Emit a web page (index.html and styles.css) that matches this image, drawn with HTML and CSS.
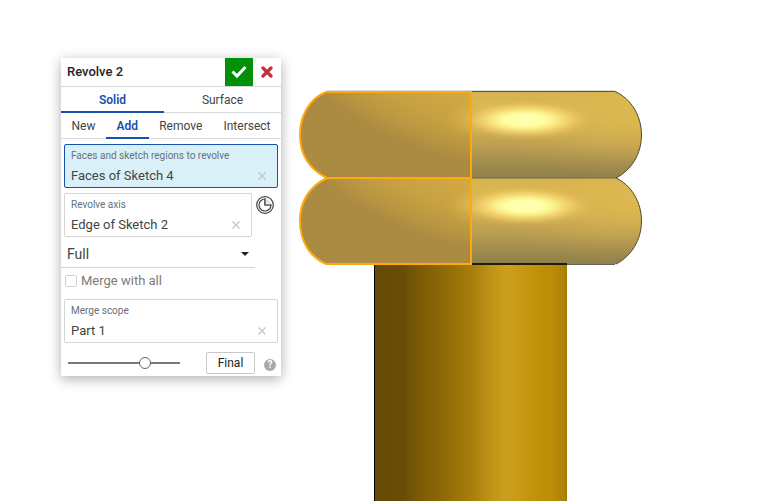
FILE: index.html
```html
<!DOCTYPE html>
<html lang="en">
<head>
<meta charset="utf-8">
<title>Revolve 2</title>
<link rel="stylesheet" href="styles.css">
</head>
<body>
<main class="workspace">
  <form class="panel">
    <header class="panel-header">
      <h1 class="title">Revolve 2</h1>
      <button type="button" class="accept" aria-label="Accept">
        <svg width="16" height="14" viewBox="0 0 16 14"><path d="M1.500 6.500 6 11 14.500 2" fill="none" stroke="#fff" stroke-width="3"/></svg>
      </button>
      <button type="button" class="cancel" aria-label="Cancel">
        <svg width="12" height="12" viewBox="0 0 12 12"><path d="M2 2 10 10M10 2 2 10" stroke="#c1303b" stroke-width="3.200" stroke-linecap="round"/></svg>
      </button>
    </header>
    <nav class="tabs tabs-type">
      <button type="button" class="tab active">Solid</button>
      <button type="button" class="tab">Surface</button>
    </nav>
    <nav class="tabs tabs-operation">
      <button type="button" class="tab">New</button>
      <button type="button" class="tab active">Add</button>
      <button type="button" class="tab">Remove</button>
      <button type="button" class="tab">Intersect</button>
    </nav>
    <div class="fields">
      <div class="field selected">
        <label for="faces">Faces and sketch regions to revolve</label>
        <div class="entry">
          <input id="faces" type="text" value="Faces of Sketch 4">
          <button type="button" class="clear" aria-label="Clear faces"><svg width="8" height="8" viewBox="0 0 8 8"><path d="M.5.5l7 7M7.5.5l-7 7"/></svg></button>
        </div>
      </div>
      <div class="axis-row">
        <div class="field">
          <label for="axis">Revolve axis</label>
          <div class="entry">
            <input id="axis" type="text" value="Edge of Sketch 2">
            <button type="button" class="clear" aria-label="Clear axis"><svg width="8" height="8" viewBox="0 0 8 8"><path d="M.5.5l7 7M7.5.5l-7 7"/></svg></button>
          </div>
        </div>
        <button type="button" class="axis-mode" aria-label="Revolve angle">
          <svg width="18" height="18" viewBox="0 0 18 18" fill="none" stroke="#444" stroke-width="1.200"><circle cx="9" cy="9" r="8.300"/><path d="M9 3A6 6 0 1 0 15 9H9z" fill="#fff"/><path d="M9 3v6h6A6 6 0 0 0 9 3z" fill="#e4e4e4" stroke="none"/><path d="M9 2.500V9h6.500"/></svg>
        </button>
      </div>
    </div>
    <div class="extent">
      <select aria-label="Revolve type"><option>Full</option></select>
      <svg class="caret" width="8" height="4" viewBox="0 0 8 4"><path d="M0 0h8L4 4z" fill="#222"/></svg>
    </div>
    <label class="merge-all"><input type="checkbox">Merge with all</label>
    <div class="fields">
      <div class="field">
        <label for="scope">Merge scope</label>
        <div class="entry">
          <input id="scope" type="text" value="Part 1">
          <button type="button" class="clear" aria-label="Clear scope"><svg width="8" height="8" viewBox="0 0 8 8"><path d="M.5.5l7 7M7.5.5l-7 7"/></svg></button>
        </div>
      </div>
    </div>
    <footer class="panel-footer">
      <input class="opacity" type="range" min="0" max="100" value="71" aria-label="Preview opacity">
      <button type="button" class="final">Final</button>
      <button type="button" class="help" aria-label="Help">?</button>
    </footer>
  </form>
  <svg class="model" viewBox="281 0 502 501" preserveAspectRatio="xMinYMin meet" role="img" aria-label="Revolved part preview">
    <defs>
      <linearGradient id="shaft" x1="0" x2="1" y1="0" y2="0">
        <stop offset="0" stop-color="#644a04"/><stop offset=".15" stop-color="#684e05"/>
        <stop offset=".17" stop-color="#6c5205"/><stop offset=".27" stop-color="#835f06"/>
        <stop offset=".38" stop-color="#936c06"/><stop offset=".5" stop-color="#a67e0a"/>
        <stop offset=".6" stop-color="#bd9216"/><stop offset=".68" stop-color="#cc9f1e"/>
        <stop offset=".75" stop-color="#c79a17"/><stop offset=".83" stop-color="#c0930a"/>
        <stop offset=".92" stop-color="#bb8d08"/><stop offset=".98" stop-color="#ae8408"/><stop offset="1" stop-color="#a27b07"/>
      </linearGradient>
      <linearGradient id="side" x1="0" x2="0" y1="0" y2="1">
        <stop offset="0" stop-color="#d4b352"/><stop offset=".15" stop-color="#d9b750"/>
        <stop offset=".42" stop-color="#d0ae50"/><stop offset=".65" stop-color="#b99d51"/>
        <stop offset=".85" stop-color="#9f8a4e"/><stop offset="1" stop-color="#90804b"/>
      </linearGradient>
      <radialGradient id="warm" gradientUnits="userSpaceOnUse" cx="0" cy="0" r="1" gradientTransform="translate(632 112) scale(150 66)">
        <stop offset="0" stop-color="#dfba51" stop-opacity=".85"/><stop offset=".4" stop-color="#dcb650" stop-opacity=".5"/><stop offset=".75" stop-color="#d6b04f" stop-opacity=".12"/><stop offset="1" stop-color="#d4ae4e" stop-opacity="0"/>
      </radialGradient>
      <radialGradient id="shine" gradientUnits="userSpaceOnUse" cx="0" cy="0" r="1" gradientTransform="translate(525 120) scale(72 21)">
        <stop offset="0" stop-color="#ffffb9"/><stop offset=".28" stop-color="#ffffa4"/>
        <stop offset=".43" stop-color="#fff590" stop-opacity=".88"/><stop offset=".65" stop-color="#ffdc76" stop-opacity=".55"/>
        <stop offset=".84" stop-color="#efc65f" stop-opacity=".2"/><stop offset="1" stop-color="#e0bb53" stop-opacity="0"/>
      </radialGradient>
      <radialGradient id="glow" gradientUnits="userSpaceOnUse" cx="0" cy="0" r="1" gradientTransform="translate(474 119) scale(30 20)">
        <stop offset="0" stop-color="#e9bf57" stop-opacity=".8"/><stop offset="1" stop-color="#dbb046" stop-opacity="0"/>
      </radialGradient>
      <radialGradient id="face" gradientUnits="userSpaceOnUse" cx="0" cy="0" r="1" gradientTransform="translate(490 70) rotate(12) scale(205 95)">
        <stop offset="0" stop-color="#dbb046"/><stop offset=".35" stop-color="#d2a844"/>
        <stop offset=".65" stop-color="#c6a042"/><stop offset=".86" stop-color="#b89541"/><stop offset="1" stop-color="#ab8a41"/>
      </radialGradient>
      <g id="ring">
        <path d="M471 91.500H615C632 99 641.500 117 641.500 135S632 170 616 178H471z" fill="url(#side)"/>
        <path d="M471 91.500H615C632 99 641.500 117 641.500 135S632 170 616 178H471z" fill="url(#warm)"/>
        <path d="M615 91.500C632 99 641.500 117 641.500 135S632 170 616 178" fill="none" stroke="#514a32"/>
        <ellipse cx="525" cy="120" rx="72" ry="21" fill="url(#shine)"/>
        <path d="M326 92C309 99 300 116 300 135S309 169 327 178H471V92z" fill="url(#face)"/>
        <path d="M440 98h31v42h-31z" fill="url(#glow)"/>
      </g>
    </defs>
    <path d="M375 264h192v237H375z" fill="url(#shaft)"/>
    <path d="M374.500 265v236" stroke="#000"/>
    <use href="#ring" y="86"/>
    <use href="#ring"/>
    <path d="M327 90.500H615" stroke="#ddd"/>
    <path d="M472 91.500H615" stroke="#55564a"/>
    <path d="M472 178H616" stroke="#766a43"/>
    <path d="M472 264.500H615" stroke="#66645b"/>
    <path d="M472 264H567" stroke="#211d0a" stroke-width="2"/>
    <g fill="none" stroke="#ffa90f" stroke-width="2">
      <path d="M471 92H326C309 99 300 116 300 135S309 169 327 178H471z"/>
      <path d="M471 178H327C309 187 300 202 300 221S309 257 326 264H471z"/>
    </g>
  </svg>
</main>
</body>
</html>
```
FILE: styles.css
```css
* {
  box-sizing: border-box;
}

body {
  margin: 0;
  background: #fff;
  color: #444;
  font: 13px/20px Roboto, "Liberation Sans", sans-serif;
}

button,
input,
select {
  margin: 0;
  padding: 0;
  border: 0;
  background: none;
  color: inherit;
  font: inherit;
}

svg {
  display: block;
}

.workspace {
  display: flex;
  align-items: flex-start;
  min-height: 100vh;
  padding-left: 61px;
  overflow: hidden;
}

.panel {
  flex: 0 0 220px;
  min-width: 0;
  margin-top: 58px;
  background: #fff;
  box-shadow: 0 3px 12px rgba(0, 0, 0, 0.32);
}

.model {
  flex: 1;
  min-width: 0;
  height: 100vh;
}

.panel-header {
  display: flex;
  height: 29px;
  border-bottom: 1px solid #d3d6da;
}

.title {
  flex: 1;
  margin: 0;
  padding-left: 6px;
  color: #222;
  font-size: 13px;
  font-weight: 500;
  line-height: 28px;
}

.accept,
.cancel {
  display: grid;
  place-items: center;
  width: 28px;
}

.accept {
  background: #009108;
}

.tabs {
  display: flex;
  height: 26px;
  border-bottom: 1px solid #d8dbdf;
  font-size: 12px;
}

.tab {
  flex: 1 1 auto;
  height: 26px;
  padding-top: 1px;
  border-bottom: 2px solid transparent;
}

.tabs-type .tab.active {
  flex: 0 0 103px;
}

.tab.active {
  border-color: #1651b0;
  color: #1651b0;
  font-weight: 600;
}

.fields {
  display: grid;
  grid-template-columns: minmax(0, 1fr);
  gap: 5px;
  padding: 5px 3px 0;
}

.field {
  flex: 1;
  min-width: 0;
  height: 44px;
  padding: 4px 11px 0 6px;
  border: 1px solid #d5d5d5;
  border-radius: 2px;
}

.field.selected {
  border-color: #1651b0;
  background: #daf0f8;
}

.field label {
  display: block;
  color: #65707b;
  font-size: 10px;
  line-height: 14px;
}

.entry {
  display: flex;
  align-items: center;
  height: 25px;
}

.entry input {
  flex: 1;
  min-width: 0;
}

.clear path {
  stroke: #bfc6ca;
  stroke-width: 1.2;
}

.axis-row {
  display: flex;
  gap: 4px;
  align-items: flex-start;
}

.axis-mode {
  width: 22px;
  padding-top: 3px;
}

.extent {
  display: flex;
  align-items: center;
  width: 194px;
  height: 31px;
  padding: 4px 6px 0;
  border-bottom: 1px solid #d5d5d5;
  font-size: 14px;
}

.extent select {
  flex: 1;
  appearance: none;
}

.merge-all {
  display: flex;
  gap: 4px;
  align-items: center;
  height: 26px;
  padding-left: 4px;
  color: #7b7b7b;
}

.merge-all input {
  appearance: none;
  width: 12px;
  height: 12px;
  border: 1px solid #d0d0d0;
  border-radius: 2px;
}

.panel-footer {
  display: flex;
  align-items: center;
  height: 33px;
  padding: 6px 5px 0 7px;
}

.opacity {
  appearance: none;
  width: 112px;
  height: 12px;
}

.opacity::-webkit-slider-runnable-track {
  height: 2px;
  background: #777;
}

.opacity::-webkit-slider-thumb {
  appearance: none;
  width: 12px;
  height: 12px;
  margin-top: -5px;
  border: 1px solid #666;
  border-radius: 50%;
  background: #fff;
}

.final {
  width: 49px;
  height: 22px;
  margin-left: 26px;
  border: 1px solid #c9c9c9;
  border-radius: 2px;
  color: #222;
  font-size: 12px;
}

.help {
  width: 12px;
  height: 12px;
  margin: 4px 0 0 auto;
  border-radius: 50%;
  background: #aaa;
  color: #fff;
  font-size: 10px;
  font-weight: 700;
  line-height: 12px;
}
```
